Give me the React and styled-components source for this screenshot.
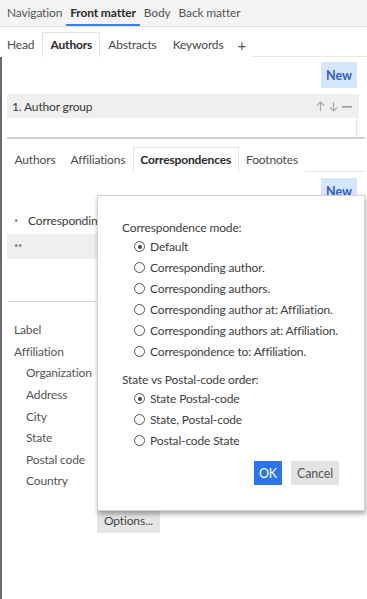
import React from "react";
import styled, { createGlobalStyle } from "styled-components";

const Global = createGlobalStyle`
  html, body { margin: 0; padding: 0; background: #fff; }
  body {
    font-family: Lato, "Liberation Sans", sans-serif;
    font-size: 12px;
    letter-spacing: -0.15px;
    color: #4a4a4a;
  }
  * { box-sizing: border-box; }
`;

const Page = styled.div`
  position: relative;
  width: 367px;
  height: 599px;
  overflow: hidden;
`;

const TopBar = styled.div`
  display: flex;
  align-items: stretch;
  height: 27px;
  padding-left: 3px;
  background: #f4f4f4;
  border-bottom: 1px solid #e0e0e0;
`;

const TopItem = styled.div`
  display: flex;
  align-items: center;
  padding: 0 4px;
  border-bottom: 2px solid ${(p) => (p.$active ? "#3d7fe8" : "transparent")};
  font-weight: ${(p) => (p.$active ? 700 : 400)};
  color: ${(p) => (p.$active ? "#2a2a2a" : "#555")};
`;

const Main = styled.div`
  border-left: 2px solid #6a6a6a;
  height: calc(599px - 27px);
`;

const TabRow = styled.div`
  display: flex;
  align-items: stretch;
  height: 25px;
  margin-top: ${(p) => p.$mt}px;
  margin-left: ${(p) => p.$ml}px;
  margin-right: ${(p) => p.$mr}px;
  border-bottom: 1px solid #e8e8e8;
`;

const Tab = styled.div`
  display: flex;
  align-items: center;
  padding: 0 ${(p) => p.$px}px;
  margin-bottom: -1px;
  background: #fff;
  border: 1px solid ${(p) => (p.$active ? "#e4e4e4" : "transparent")};
  border-bottom-color: ${(p) => (p.$active ? "#fff" : "transparent")};
  font-weight: ${(p) => (p.$active ? 700 : 400)};
  color: ${(p) => (p.$active ? "#2a2a2a" : "#4a4a4a")};
`;

const PlusTab = styled(Tab)`
  font-size: 15px;
  color: #555;
`;

const ActionRow = styled.div`
  display: flex;
  justify-content: flex-end;
  padding: ${(p) => p.$pt}px 10px 0 0;
`;

const NewButton = styled.button`
  height: 26px;
  width: 36px;
  padding: 0;
  border: none;
  background: #d5e5fb;
  color: #2f5fd0;
  font-family: inherit;
  font-size: 12.5px;
  font-weight: 700;
`;

const GroupBox = styled.div`
  margin: 6px 2px 0 5px;
  border-bottom: 2px solid #d0d0d0;
`;

const GroupHeader = styled.div`
  display: flex;
  align-items: center;
  justify-content: space-between;
  height: 24px;
  margin-right: 6px;
  padding: 0 7px 0 5px;
  background: #efefef;
  color: #3a3a3a;
`;

const GroupBody = styled.div`
  height: 19px;
  margin-right: 8px;
  border-right: 1px solid #e6e6e6;
`;

const Controls = styled.div`
  display: flex;
  align-items: center;
  gap: 4px;
`;

const ListRow = styled.div`
  display: flex;
  align-items: center;
  height: ${(p) => p.$h}px;
  margin: ${(p) => p.$mt}px 8px 0 5px;
  padding-left: 7px;
  background: ${(p) => (p.$shaded ? "#efefef" : "transparent")};
  color: #3a3a3a;
  white-space: nowrap;
`;

const Star = styled.span`
  display: inline-block;
  width: 14px;
  font-size: 10px;
  padding-top: ${(p) => (p.$low ? 4 : 0)}px;
`;

const Divider = styled.div`
  margin: 42px 8px 0 5px;
  border-top: 1px solid #d8d8d8;
`;

const Form = styled.div`
  display: grid;
  grid-template-columns: 83px 1fr;
  grid-auto-rows: 21.6px;
  align-items: center;
  margin-top: 17px;
  padding-left: 12px;
  color: #555;
`;

const FieldLabel = styled.div`
  grid-column: 1;
  padding-left: ${(p) => (p.$indent ? 12 : 0)}px;
`;

const OptionsRow = styled.div`
  display: flex;
  padding: 17px 0 0 95px;
`;

const OptionsButton = styled.button`
  height: 24px;
  width: 63px;
  padding: 0;
  border: none;
  background: #e6e6e6;
  color: #444;
  font-family: inherit;
  font-size: 12px;
  letter-spacing: -0.15px;
`;

const Popover = styled.div`
  position: absolute;
  left: 97px;
  top: 195px;
  width: 268px;
  height: 316px;
  padding: 24px 25px 0 24px;
  background: #fff;
  border: 1px solid #d4d4d4;
  box-shadow: 1px 3px 5px rgba(0, 0, 0, 0.35);
  color: #3e3e3e;
`;

const GroupTitle = styled.div`
  height: 16px;
  line-height: 16px;
  margin-top: ${(p) => p.$mt}px;
`;

const RadioList = styled.div`
  display: flex;
  flex-direction: column;
  padding-left: 12px;
`;

const RadioItem = styled.label`
  display: flex;
  align-items: center;
  gap: 5px;
  height: 21px;
  white-space: nowrap;
`;

const RadioCircle = styled.span`
  position: relative;
  display: inline-block;
  width: 11px;
  height: 11px;
  border: 1px solid #555;
  border-radius: 50%;
  flex: none;
  &::after {
    content: "";
    display: ${(p) => (p.$on ? "block" : "none")};
    position: absolute;
    left: 2.5px;
    top: 2.5px;
    width: 4px;
    height: 4px;
    border-radius: 50%;
    background: #444;
  }
`;

const Buttons = styled.div`
  display: flex;
  justify-content: flex-end;
  gap: 9px;
  margin-top: 10px;
`;

const DialogButton = styled.button`
  height: 24px;
  width: ${(p) => p.$w}px;
  padding: 0;
  border: none;
  background: ${(p) => (p.$primary ? "#2d74ef" : "#e3e3e3")};
  color: ${(p) => (p.$primary ? "#fff" : "#555")};
  font-family: inherit;
  font-size: 12.5px;
  letter-spacing: -0.15px;
`;

const Arrow = ({ down }) => (
  <svg width="9" height="11" viewBox="0 0 9 11" fill="none" stroke="#a8a8a8" strokeWidth="1.2">
    {down ? (
      <path d="M4.5 1v9M1 6.5l3.5 3.5L8 6.5" />
    ) : (
      <path d="M4.5 10V1M1 4.5L4.5 1 8 4.5" />
    )}
  </svg>
);

const Minus = () => (
  <svg width="10" height="11" viewBox="0 0 10 11">
    <rect x="0" y="5" width="10" height="1.6" fill="#9a9a9a" />
  </svg>
);

const modes = [
  "Default",
  "Corresponding author.",
  "Corresponding authors.",
  "Corresponding author at: Affiliation.",
  "Corresponding authors at: Affiliation.",
  "Correspondence to: Affiliation.",
];
const orders = ["State Postal-code", "State, Postal-code", "Postal-code State"];

export default function App() {
  return (
    <Page>
      <Global />
      <TopBar>
        <TopItem>Navigation</TopItem>
        <TopItem $active>Front matter</TopItem>
        <TopItem>Body</TopItem>
        <TopItem>Back matter</TopItem>
      </TopBar>
      <Main>
        <TabRow $mt={5} $ml={-3} $mr={0}>
          <Tab $px={7}>Head</Tab>
          <Tab $px={7} $active>Authors</Tab>
          <Tab $px={7}>Abstracts</Tab>
          <Tab $px={7}>Keywords</Tab>
          <PlusTab $px={5}>+</PlusTab>
        </TabRow>
        <ActionRow $pt={5}>
          <NewButton>New</NewButton>
        </ActionRow>
        <GroupBox>
          <GroupHeader>
            <span>1. Author group</span>
            <Controls>
              <Arrow />
              <Arrow down />
              <Minus />
            </Controls>
          </GroupHeader>
          <GroupBody />
        </GroupBox>
        <TabRow $mt={8} $ml={5} $mr={2}>
          <Tab $px={6.5}>Authors</Tab>
          <Tab $px={6.5}>Affiliations</Tab>
          <Tab $px={6.5} $active>Correspondences</Tab>
          <Tab $px={6.5}>Footnotes</Tab>
        </TabRow>
        <ActionRow $pt={6}>
          <NewButton>New</NewButton>
        </ActionRow>
        <ListRow $h={28} $mt={2}>
          <Star $low>*</Star>Corresponding author.
        </ListRow>
        <ListRow $h={25} $mt={0} $shaded>
          <Star>**</Star>
        </ListRow>
        <Divider />
        <Form>
          <FieldLabel>Label</FieldLabel>
          <FieldLabel>Affiliation</FieldLabel>
          <FieldLabel $indent>Organization</FieldLabel>
          <FieldLabel $indent>Address</FieldLabel>
          <FieldLabel $indent>City</FieldLabel>
          <FieldLabel $indent>State</FieldLabel>
          <FieldLabel $indent>Postal code</FieldLabel>
          <FieldLabel $indent>Country</FieldLabel>
        </Form>
        <OptionsRow>
          <OptionsButton>Options...</OptionsButton>
        </OptionsRow>
      </Main>
      <Popover>
        <GroupTitle $mt={0}>Correspondence mode:</GroupTitle>
        <RadioList>
          {modes.map((m, i) => (
            <RadioItem key={m}>
              <RadioCircle $on={i === 0} />
              {m}
            </RadioItem>
          ))}
        </RadioList>
        <GroupTitle $mt={10}>State vs Postal-code order:</GroupTitle>
        <RadioList>
          {orders.map((m, i) => (
            <RadioItem key={m}>
              <RadioCircle $on={i === 0} />
              {m}
            </RadioItem>
          ))}
        </RadioList>
        <Buttons>
          <DialogButton $primary $w={28}>OK</DialogButton>
          <DialogButton $w={48}>Cancel</DialogButton>
        </Buttons>
      </Popover>
    </Page>
  );
}
